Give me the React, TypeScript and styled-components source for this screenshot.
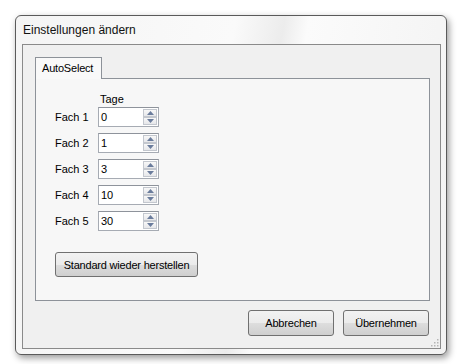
import React from "react";
import styled, { createGlobalStyle } from "styled-components";

const Global = createGlobalStyle`
  html, body { margin: 0; padding: 0; background: #ffffff; }
  body { font-family: "Liberation Sans", Arial, sans-serif; font-size: 12px; color: #000; }
`;

const Stage = styled.div`
  width: 461px;
  height: 364px;
  padding: 15px 0 0 15px;
  box-sizing: border-box;
`;

const Window = styled.div`
  width: 432px;
  height: 340px;
  box-sizing: border-box;
  border: 1px solid #5a5a5a;
  border-radius: 6px;
  background: linear-gradient(100deg, #f4f4f4 0%, #fafafa 45%, #ececec 55%, #fbfbfb 60%, #f2f2f2 100%);
  box-shadow: 2px 3px 7px rgba(0, 0, 0, 0.4);
  display: flex;
  flex-direction: column;
  padding: 0 5px 5px 6px;
`;

const TitleBar = styled.div`
  height: 28px;
  display: flex;
  align-items: center;
  padding-left: 1px;
  font-family: "Liberation Sans", Arial, sans-serif;
  font-size: 12px;
  color: #111;
`;

const Client = styled.div`
  flex: 1;
  border: 1px solid #8a8a8a;
  background: #f0f0f0;
  display: flex;
  flex-direction: column;
  padding: 12px 10px 12px 12px;
  position: relative;
`;

const TabStrip = styled.div`
  display: flex;
  height: 21px;
`;

const Tab = styled.div`
  width: 67px;
  box-sizing: border-box;
  border: 1px solid #8d9299;
  border-bottom: none;
  background: #f9f9f9;
  font-size: 11px;
  padding: 4px 0 0 6px;
  letter-spacing: -0.2px;
  position: relative;
  z-index: 1;
  margin-bottom: -1px;
`;

const TabPanel = styled.div`
  height: 223px;
  box-sizing: border-box;
  border: 1px solid #8d9299;
  background: #f7f7f7;
  padding: 14px 0 0 19px;
  display: flex;
  flex-direction: column;
`;

const Grid = styled.div`
  display: grid;
  grid-template-columns: 43px 61px;
  row-gap: 6px;
  align-items: center;
`;

const Header = styled.div`
  grid-column: 2;
  font-size: 11px;
  padding-left: 2px;
  margin-bottom: -4px;
`;

const Label = styled.div`
  font-size: 11px;
`;

const Spin = styled.div`
  height: 20px;
  box-sizing: border-box;
  border: 1px solid #a6abb3;
  border-top-color: #8e939b;
  background: #fff;
  display: flex;
  align-items: stretch;
`;

const SpinText = styled.div`
  flex: 1;
  font-size: 11px;
  padding: 3px 0 0 2px;
`;

const SpinButtons = styled.div`
  width: 14px;
  display: flex;
  flex-direction: column;
  padding: 1px 1px 1px 0;
`;

const SpinBtn = styled.div`
  flex: 1;
  border: 1px solid #c3c7ce;
  background: linear-gradient(#f8f8f8, #e6e7ea);
  display: flex;
  align-items: center;
  justify-content: center;
`;

const StdButton = styled.div`
  margin-top: 21px;
  width: 143px;
  height: 25px;
  box-sizing: border-box;
  border: 1px solid #707070;
  border-radius: 3px;
  background: linear-gradient(#f2f2f2 0%, #ebebeb 50%, #dddddd 51%, #cfcfcf 100%);
  font-size: 11px;
  display: flex;
  align-items: center;
  justify-content: center;
  letter-spacing: -0.2px;
`;

const Footer = styled.div`
  display: flex;
  justify-content: flex-end;
  gap: 9px;
  padding-top: 9px;
  padding-right: 1px;
`;

const Button = styled(StdButton)`
  margin-top: 0;
  width: 86px;
  height: 26px;
`;

const Grip = styled.svg`
  position: absolute;
  right: 1px;
  bottom: 1px;
`;

const Arrow = ({ up }: { up?: boolean }) => (
  <svg width="7" height="4" viewBox="0 0 7 4">
    <path d={up ? "M0 4 L3.5 0 L7 4 Z" : "M0 0 L3.5 4 L7 0 Z"} fill="#6a7c9c" />
  </svg>
);

const rows = [
  ["Fach 1", "0"],
  ["Fach 2", "1"],
  ["Fach 3", "3"],
  ["Fach 4", "10"],
  ["Fach 5", "30"],
];

export default function App() {
  return (
    <>
      <Global />
      <Stage>
        <Window>
          <TitleBar>Einstellungen ändern</TitleBar>
          <Client>
            <TabStrip>
              <Tab>AutoSelect</Tab>
            </TabStrip>
            <TabPanel>
              <Grid>
                <Header>Tage</Header>
                {rows.map(([l, v]) => (
                  <React.Fragment key={l}>
                    <Label>{l}</Label>
                    <Spin>
                      <SpinText>{v}</SpinText>
                      <SpinButtons>
                        <SpinBtn><Arrow up /></SpinBtn>
                        <SpinBtn><Arrow /></SpinBtn>
                      </SpinButtons>
                    </Spin>
                  </React.Fragment>
                ))}
              </Grid>
              <StdButton>Standard wieder herstellen</StdButton>
            </TabPanel>
            <Footer>
              <Button>Abbrechen</Button>
              <Button>Übernehmen</Button>
            </Footer>
            <Grip width="10" height="10" viewBox="0 0 10 10">
              {[[8, 2], [8, 5], [8, 8], [5, 5], [5, 8], [2, 8]].map(([x, y]) => (
                <rect key={`${x}-${y}`} x={x} y={y} width="1.5" height="1.5" fill="#b5b5b5" />
              ))}
            </Grip>
          </Client>
        </Window>
      </Stage>
    </>
  );
}
